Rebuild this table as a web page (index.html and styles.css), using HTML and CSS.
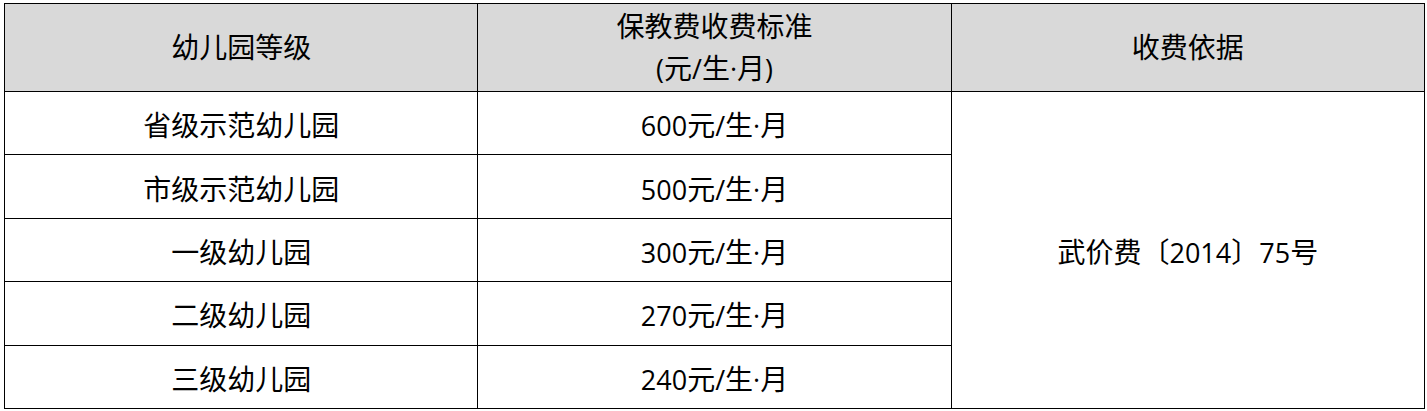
FILE: index.html
```html
<!DOCTYPE html>
<html lang="zh-CN">
<head>
<meta charset="utf-8">
<link rel="stylesheet" href="styles.css">
</head>
<body>
<table class="fee-table">
  <thead>
    <tr class="head-row">
      <th>幼儿园等级</th>
      <th>保教费收费标准<br><span class="lat">(</span>元<span class="lat">/</span>生<span class="lat">·</span>月<span class="lat">)</span></th>
      <th>收费依据</th>
    </tr>
  </thead>
  <tbody>
    <tr><td>省级示范幼儿园</td><td><span class="lat">600</span>元<span class="lat">/</span>生<span class="lat">·</span>月</td><td rowspan="5">武价费〔<span class="lat">2014</span>〕<span class="lat">75</span>号</td></tr>
    <tr><td>市级示范幼儿园</td><td><span class="lat">500</span>元<span class="lat">/</span>生<span class="lat">·</span>月</td></tr>
    <tr><td>一级幼儿园</td><td><span class="lat">300</span>元<span class="lat">/</span>生<span class="lat">·</span>月</td></tr>
    <tr><td>二级幼儿园</td><td><span class="lat">270</span>元<span class="lat">/</span>生<span class="lat">·</span>月</td></tr>
    <tr><td>三级幼儿园</td><td><span class="lat">240</span>元<span class="lat">/</span>生<span class="lat">·</span>月</td></tr>
  </tbody>
</table>
</body>
</html>
```

FILE: styles.css
```css
html, body {
  margin: 0;
  padding: 0;
  background: #ffffff;
}
body {
  padding: 3px 0 0 4px;
  font-family: "Noto Sans CJK SC", sans-serif;
  color: #000000;
}
.fee-table {
  border-collapse: collapse;
  width: 1421px;
  table-layout: fixed;
}
.fee-table th,
.fee-table td {
  border: 1px solid #000000;
  text-align: center;
  vertical-align: middle;
  font-size: 28px;
  font-weight: 400;
  padding: 2px 0 0 0;
  line-height: 44px;
}
.fee-table th {
  background: #d9d9d9;
  height: 84px;
  line-height: 42px;
  padding: 0 0 3px 0;
}
.fee-table tbody tr {
  height: 63.4px;
}
.lat {
  font-family: "Open Sans", sans-serif;
  font-size: 27px;
  font-weight: 400;
  line-height: 1;
}
```
